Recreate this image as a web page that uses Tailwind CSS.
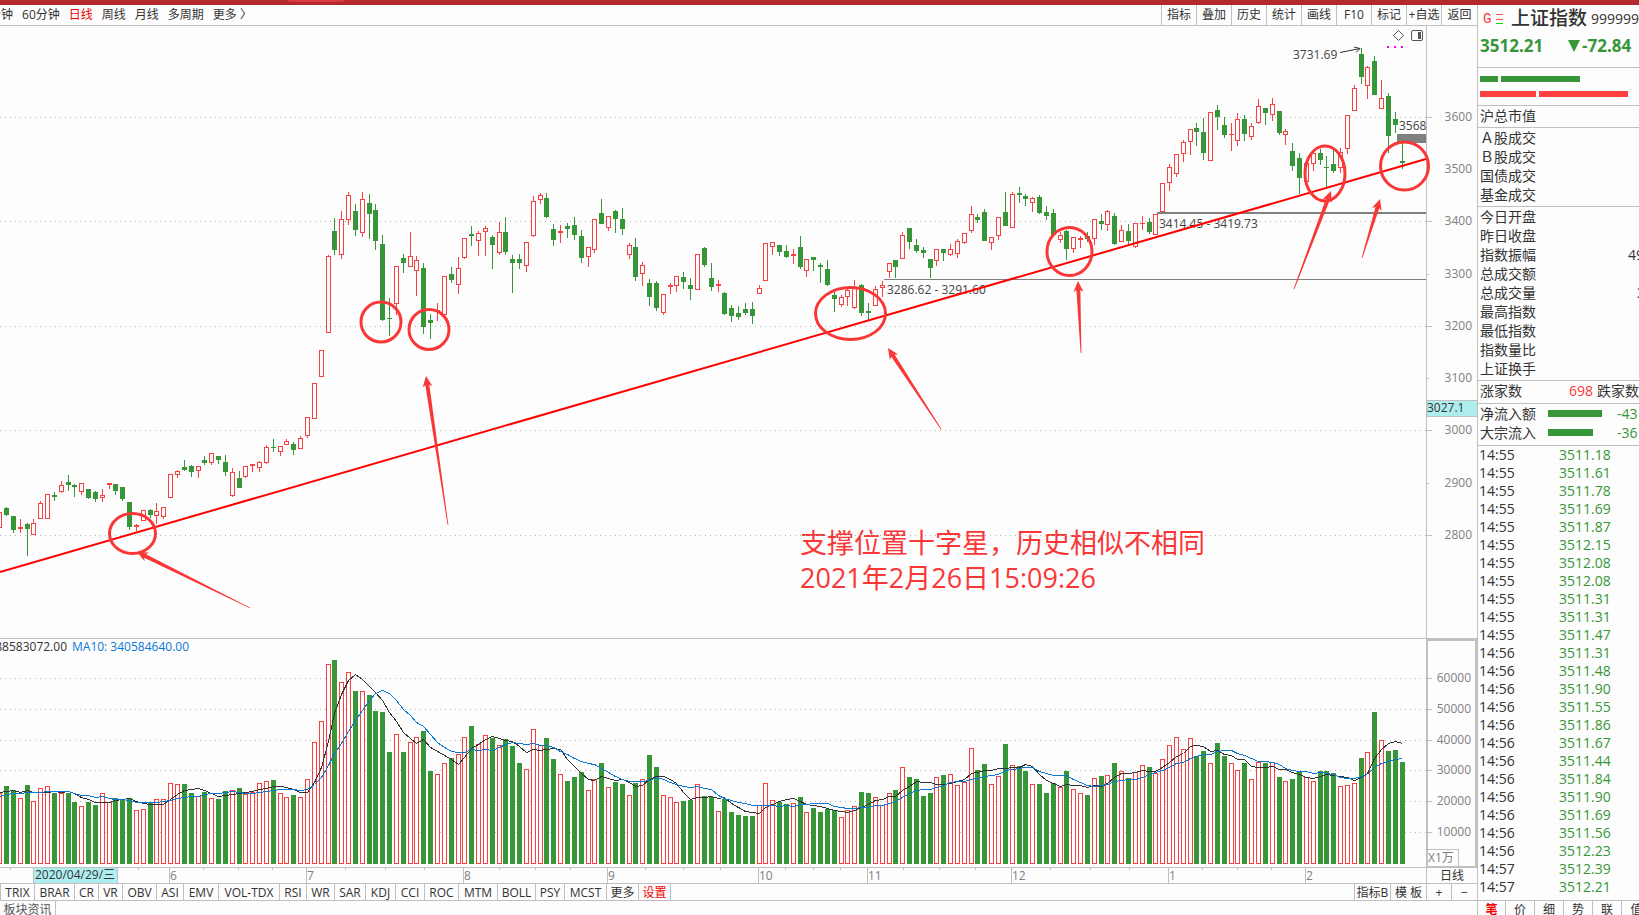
<!DOCTYPE html>
<html lang="zh-CN">

<head>
    <meta charset="UTF-8">
    <meta name="viewport" content="width=device-width, initial-scale=1.0">
    <title>上证指数 日线</title>
    <script src="https://cdn.jsdelivr.net/npm/@tailwindcss/browser@4"></script>
</head>

<body class="bg-[#fdfdfd] text-[#333] text-xs font-['Open_Sans','Noto_Sans_CJK_SC',sans-serif]">
    <div class="h-screen flex flex-col overflow-hidden whitespace-nowrap">
        <!-- Title strip -->
        <div class="h-[5px] shrink-0 bg-[#b5282f] flex">
            <div class="ml-72 w-14 h-0.5 bg-[#d83a40] rounded-b"></div>
        </div>

        <div class="flex-1 flex min-h-0">
            <!-- Chart side -->
            <main class="flex-1 min-w-0 flex flex-col">
                <nav class="h-[21px] shrink-0 flex justify-between border-b border-[#c0c0c0]">
                    <div class="flex items-center gap-[9px] -ml-[11px]">
                        <button>分钟</button>
                        <button>60分钟</button>
                        <button class="text-[#f00000]">日线</button>
                        <button>周线</button>
                        <button>月线</button>
                        <button>多周期</button>
                        <button>更多 〉</button>
                    </div>
                    <div class="flex">
                        <button class="w-[35px] border-l border-[#c0c0c0]">指标</button>
                        <button class="w-[35px] border-l border-[#c0c0c0]">叠加</button>
                        <button class="w-[35px] border-l border-[#c0c0c0]">历史</button>
                        <button class="w-[35px] border-l border-[#c0c0c0]">统计</button>
                        <button class="w-[35px] border-l border-[#c0c0c0]">画线</button>
                        <button class="w-[35px] border-l border-[#c0c0c0]">F10</button>
                        <button class="w-[35px] border-l border-[#c0c0c0]">标记</button>
                        <button class="w-[35px] border-l border-[#c0c0c0]">+自选</button>
                        <button class="w-9 border-l border-[#c0c0c0]">返回</button>
                    </div>
                </nav>

                <!-- Price pane -->
                <section class="relative flex-1 min-h-0 flex">
                    <svg class="flex-1 min-w-0 h-full overflow-visible z-10">
                        <!-- all y values count from the top of the window -->
                        <g transform="translate(0 -26)">
                            <g id="priceGrid" stroke="#b4b4b4" stroke-dasharray="1 4"></g>
                            <path d="M884 279.5H1426" stroke="#808080" />
                            <path d="M1157 213H1426" stroke="#808080" stroke-width="2" />
                            <rect x="1397" y="134" width="29" height="9" fill="#808080" />
                            <g id="candles" shape-rendering="crispEdges"></g>
                            <g fill="#444">
                                <text x="887" y="294">3286.62 - 3291.60</text>
                                <text x="1159" y="228">3414.45 - 3419.73</text>
                                <text x="1293" y="59">3731.69</text>
                                <text x="1399" y="130">3568</text>
                            </g>
                            <path d="M0 572L1426 159" stroke="#f00" stroke-width="2" />
                            <path d="M1340 52.500L1360 48.500M1354 47L1360 48.500L1356 52.500" stroke="#333" fill="none" />
                            <g fill="#f0f">
                                <rect x="1387" y="46" width="2" height="2" />
                                <rect x="1394" y="46" width="2" height="2" />
                                <rect x="1401" y="46" width="2" height="2" />
                            </g>
                            <path d="M1398.500 30.500L1403.500 35.500L1398.500 40.500L1393.500 35.500Z" fill="none" stroke="#555" />
                            <rect x="1411.500" y="30.500" width="11" height="10" rx="1.500" fill="none" stroke="#555" />
                            <rect x="1418" y="32" width="3" height="7" fill="#555" />
                            <g fill="none" stroke="#fa3737" stroke-width="3">
                                <ellipse cx="132.500" cy="533.500" rx="23" ry="20" />
                                <circle cx="381" cy="322" r="20" />
                                <circle cx="429" cy="329.500" r="20" />
                                <ellipse cx="850.500" cy="313.500" rx="35" ry="26" />
                                <ellipse cx="1069.500" cy="251.500" rx="22.500" ry="24" />
                                <ellipse cx="1325" cy="173.500" rx="20" ry="27.500" />
                                <circle cx="1404.500" cy="166" r="24" />
                            </g>
                            <g id="arrows" fill="#fa3737"></g>
                        </g>
                    </svg>
                    <svg class="w-[51px] shrink-0 h-full border-l border-[#c0c0c0]">
                        <g id="priceAxis" transform="translate(0 -26)" fill="#808080" text-anchor="end"></g>
                        <rect x="0" y="374.500" width="51" height="16" fill="#afeeee" stroke="#c0c0c0" />
                        <text x="0" y="386" fill="#333">3027.1</text>
                    </svg>
                    <p class="absolute left-[800px] top-[499px] text-[27px] leading-[35px] text-[#fa3737]">支撑位置十字星，历史相似不相同<br>2021年2月26日15:09:26</p>
                </section>

                <!-- Volume pane -->
                <section class="relative h-[230px] shrink-0 flex border-t border-[#c0c0c0]">
                    <svg class="flex-1 min-w-0 h-full border-b border-[#c0c0c0]">
                        <g transform="translate(0 -639)">
                            <g id="volumeGrid" stroke="#b4b4b4" stroke-dasharray="1 4"></g>
                            <g id="volumes" shape-rendering="crispEdges"></g>
                            <polyline id="ma5" fill="none" stroke="#333" shape-rendering="crispEdges" />
                            <polyline id="ma10" fill="none" stroke="#0a78d2" shape-rendering="crispEdges" />
                        </g>
                    </svg>
                    <div class="relative w-[51px] shrink-0 border-2 border-[#c0c0c0]">
                        <svg class="w-full h-full">
                            <g id="volumeAxis" transform="translate(-1 -641)" fill="#808080" text-anchor="end"></g>
                        </svg>
                        <span class="absolute left-0 bottom-0 w-[31px] h-[17px] leading-4 border-t border-r border-[#c0c0c0] text-[#808080]">X1万</span>
                    </div>
                    <div class="absolute left-0 top-0 flex leading-4 gap-[5px]">
                        <span class="w-[67px] overflow-hidden flex justify-end">388583072.00</span>
                        <span class="text-[#0a78d2]">MA10: 340584640.00</span>
                    </div>
                </section>

                <!-- Date axis -->
                <div class="relative h-4 shrink-0 flex border-b border-[#c0c0c0]">
                    <svg id="dateAxis" class="flex-1 min-w-0 h-full" fill="#808080"></svg>
                    <div class="w-[51px] shrink-0 border-l border-[#c0c0c0] text-center leading-4">日线</div>
                    <div class="absolute left-[33px] top-0 w-[85px] h-[15px] leading-3.5 px-px bg-[#afeeee] border-x border-[#c0c0c0]">2020/04/29/三</div>
                </div>

                <!-- Indicator tabs -->
                <div class="h-[17px] shrink-0 flex justify-between border-b border-l border-[#c0c0c0]">
                    <div class="flex leading-[17px]">
                        <button class="w-[34px] border-r border-[#c0c0c0]">TRIX</button>
                        <button class="w-10 border-r border-[#c0c0c0]">BRAR</button>
                        <button class="w-6 border-r border-[#c0c0c0]">CR</button>
                        <button class="w-6 border-r border-[#c0c0c0]">VR</button>
                        <button class="w-[34px] border-r border-[#c0c0c0]">OBV</button>
                        <button class="w-[27px] border-r border-[#c0c0c0]">ASI</button>
                        <button class="w-[35px] border-r border-[#c0c0c0]">EMV</button>
                        <button class="w-[61px] border-r border-[#c0c0c0]">VOL-TDX</button>
                        <button class="w-[27px] border-r border-[#c0c0c0]">RSI</button>
                        <button class="w-7 border-r border-[#c0c0c0]">WR</button>
                        <button class="w-[31px] border-r border-[#c0c0c0]">SAR</button>
                        <button class="w-[30px] border-r border-[#c0c0c0]">KDJ</button>
                        <button class="w-[29px] border-r border-[#c0c0c0]">CCI</button>
                        <button class="w-[34px] border-r border-[#c0c0c0]">ROC</button>
                        <button class="w-[39px] border-r border-[#c0c0c0]">MTM</button>
                        <button class="w-[38px] border-r border-[#c0c0c0]">BOLL</button>
                        <button class="w-[29px] border-r border-[#c0c0c0]">PSY</button>
                        <button class="w-[42px] border-r border-[#c0c0c0]">MCST</button>
                        <button class="w-8 border-r border-[#c0c0c0]">更多</button>
                        <button class="w-8 border-r border-[#c0c0c0] text-[#f00000]">设置</button>
                    </div>
                    <div class="flex leading-[17px]">
                        <button class="w-9 border-l border-[#c0c0c0]">指标B</button>
                        <button class="w-9 border-l border-[#c0c0c0]">模 板</button>
                        <button class="w-[25px] border-l border-[#c0c0c0]">+</button>
                        <button class="w-[26px] border-l border-[#c0c0c0]">−</button>
                    </div>
                </div>
                <div class="h-3.5 shrink-0 flex overflow-hidden">
                    <button class="w-14 h-[18px] border-r border-[#c0c0c0] text-[#555]">板块资讯</button>
                </div>
            </main>

            <!-- Quote panel -->
            <aside class="w-[162px] shrink-0 flex flex-col overflow-hidden border-l border-[#c0c0c0] text-sm">
                <header class="h-[63px] shrink-0 border-b border-[#c0c0c0]">
                    <div class="flex items-center h-7 pl-[5px]">
                        <span class="w-[18px] font-['Liberation_Mono',monospace] text-[#fa3737]">G</span>
                        <svg class="w-3 h-3 mr-[3px] shrink-0" fill="none">
                            <path d="M0 1.500H7M0 6.500H7" stroke="#fa5050" />
                            <path d="M0 10.500H7" stroke="#00e000" />
                        </svg>
                        <h1 class="text-[19px] font-medium">上证指数</h1>
                        <span class="ml-1">999999</span>
                    </div>
                    <div class="flex leading-[26px] pl-0.5 text-[17px] font-bold text-[#379637]">
                        <span class="w-[88px]">3512.21</span>
                        <svg class="w-3 h-3 mt-[7px] mr-0.5 shrink-0" fill="#379637">
                            <path d="M0 0H12L6 12Z" />
                        </svg>
                        <span>-72.84</span>
                    </div>
                </header>
                <div class="h-[38px] shrink-0 flex flex-col gap-[9px] pt-2 pl-0.5 border-b border-[#c0c0c0]">
                    <div class="flex gap-[3px]">
                        <i class="w-[18px] h-1.5 bg-[#379637]"></i>
                        <i class="w-[79px] h-1.5 bg-[#379637]"></i>
                    </div>
                    <div class="flex gap-[3px]">
                        <i class="w-14 h-1.5 bg-[#ff4040]"></i>
                        <i class="w-[89px] h-1.5 bg-[#ff4040]"></i>
                    </div>
                </div>
                <div class="h-[22px] shrink-0 pl-0.5 leading-[19px] border-b border-[#c0c0c0]">沪总市值</div>
                <ul class="h-[79px] shrink-0 pl-0.5 leading-[19px] border-b border-[#c0c0c0]">
                    <li>Ａ股成交</li>
                    <li>Ｂ股成交</li>
                    <li>国债成交</li>
                    <li>基金成交</li>
                </ul>
                <ul class="h-[174px] shrink-0 pl-0.5 leading-[19px] border-b border-[#c0c0c0]">
                    <li>今日开盘</li>
                    <li>昨日收盘</li>
                    <li class="flex"><span class="w-[148px] shrink-0">指数振幅</span>49</li>
                    <li>总成交额</li>
                    <li class="flex"><span class="w-[157px] shrink-0">总成交量</span>3</li>
                    <li>最高指数</li>
                    <li>最低指数</li>
                    <li>指数量比</li>
                    <li>上证换手</li>
                </ul>
                <div class="h-[23px] shrink-0 flex pl-0.5 leading-[19px] border-b border-[#c0c0c0]">
                    <span class="w-[89px] shrink-0">涨家数</span>
                    <span class="w-7 shrink-0 text-[#fa3737]">698</span>
                    <span>跌家数</span>
                </div>
                <div class="h-[42px] shrink-0 pl-0.5 leading-[19px] border-b border-[#c0c0c0]">
                    <div class="flex items-center">
                        <span class="w-[68px] shrink-0">净流入额</span>
                        <div class="w-[69px] shrink-0"><div class="w-[54px] h-[7px] bg-[#379637]"></div></div>
                        <span class="text-[#379637]">-43</span>
                    </div>
                    <div class="flex items-center">
                        <span class="w-[68px] shrink-0">大宗流入</span>
                        <div class="w-[69px] shrink-0"><div class="w-[45px] h-[7px] bg-[#379637]"></div></div>
                        <span class="text-[#379637]">-36</span>
                    </div>
                </div>
                <div class="flex-1 min-h-0 overflow-hidden">
                    <table class="leading-[18px]">
                        <tbody id="trades"></tbody>
                    </table>
                </div>
                <div class="h-[15px] shrink-0 flex overflow-hidden border-t border-[#c0c0c0] text-xs">
                    <button class="w-7 h-[18px] shrink-0 border-r border-[#c0c0c0] font-bold text-[#f00000]">笔</button>
                    <button class="w-[29px] h-[18px] shrink-0 border-r border-[#c0c0c0]">价</button>
                    <button class="w-[29px] h-[18px] shrink-0 border-r border-[#c0c0c0]">细</button>
                    <button class="w-[29px] h-[18px] shrink-0 border-r border-[#c0c0c0]">势</button>
                    <button class="w-[29px] h-[18px] shrink-0 border-r border-[#c0c0c0]">联</button>
                    <button class="w-[29px] h-[18px] shrink-0">值</button>
                </div>
            </aside>
        </div>
    </div>

    <script>
        const RED = '#fa4141';
        const GREEN = '#379637';

        // direction, high, body top, body bottom, low, volume top
        const bars = `
R 512 512 528 528 793|G 507 508 515 516 786|G 516 516 530 533 790|R 519 527 529 533 798|G 523 524 529 556 785|R 519 523 535 535 801
R 501 503 519 519 788|R 494 494 519 519 786|G 492 495 497 501 793|R 481 485 492 493 793|G 475 482 485 491 793|G 484 485 487 497 802
R 483 483 492 495 806|G 489 489 498 499 802|G 491 492 499 502 805|R 489 495 498 502 793|R 483 483 485 489 802|G 484 484 491 495 798
G 487 487 499 501 799|G 502 502 527 530 798|R 524 525 527 531 810|R 510 510 521 521 809|G 509 510 515 518 803|R 503 511 516 524 799
R 507 507 517 519 799|R 474 474 498 498 783|R 470 471 475 478 784|G 460 467 470 471 784|G 465 466 472 477 793|R 466 466 471 478 796
G 456 460 463 465 792|R 453 453 463 465 798|G 456 456 460 464 799|G 455 462 472 476 791|R 468 472 496 497 790|G 471 478 488 488 788
R 466 466 477 478 794|R 464 464 466 472 792|R 461 462 468 472 783|R 445 447 463 464 781|G 439 447 448 452 780|R 446 446 452 456 793
R 439 441 445 445 797|G 442 444 450 455 795|R 436 438 449 449 797|R 417 417 436 438 779|R 383 383 419 419 742|R 350 350 377 377 721
R 255 256 333 333 664|G 218 231 250 255 660|R 211 219 255 259 682|R 192 195 220 225 672|G 204 211 230 236 691|R 192 199 233 237 691
G 194 203 214 239 695|G 204 210 241 250 711|G 235 244 320 321 712|G 298 318 319 336 752|R 266 266 304 315 734|G 254 258 263 273 752
R 232 256 267 267 742|R 256 260 271 296 737|G 263 268 327 334 731|G 314 320 323 339 771|R 303 310 311 321 774|R 276 276 315 315 763
G 267 274 280 283 758|R 257 268 285 294 754|R 238 238 258 259 737|G 226 234 236 246 726|R 231 233 241 256 744|R 226 228 232 256 735
G 235 237 245 269 738|R 222 232 253 255 745|G 217 232 252 255 739|G 255 259 263 293 746|G 254 259 263 269 763|R 242 242 266 272 769
R 196 201 236 237 729|R 193 195 200 204 745|G 193 198 217 218 738|G 224 229 240 246 759|R 225 231 233 243 774|G 223 226 229 238 781
G 217 225 235 240 777|G 230 236 258 263 772|R 247 247 257 267 790|R 219 219 250 253 779|G 199 213 224 224 763|R 216 216 228 231 787
G 210 211 219 233 782|G 208 219 229 235 784|R 243 245 255 259 795|G 238 247 277 281 783|R 262 265 274 286 779|G 279 283 297 306 755
G 281 283 308 311 767|R 294 294 313 315 795|R 283 285 287 294 797|R 276 276 286 292 802|G 272 277 282 289 801|G 278 285 289 300 800
R 254 254 290 290 784|G 247 248 265 267 796|G 263 278 287 291 797|R 280 284 286 292 811|G 292 293 314 315 799|G 305 308 316 322 812
G 306 313 317 320 815|G 303 309 313 315 816|G 302 309 316 324 816|R 285 288 294 294 805|R 243 243 281 281 783|R 242 242 247 255 800
G 245 245 252 256 802|G 245 251 257 258 804|R 249 254 256 264 803|G 236 247 267 269 797|R 259 259 271 277 812|G 257 257 260 271 808
G 263 265 267 283 812|G 260 269 285 286 809|G 290 295 299 312 810|R 295 297 305 307 817|R 287 290 297 306 810|R 280 288 308 309 806
G 284 285 313 316 792|G 303 311 313 320 793|R 286 289 306 306 797|R 281 285 288 297 805|R 263 263 272 278 793|G 260 260 267 278 790
R 232 235 259 259 767|G 228 228 242 249 777|G 239 245 251 253 779|G 247 250 253 258 796|G 259 259 268 278 793|R 249 249 261 266 777
G 249 249 253 261 775|R 244 249 255 256 774|R 239 241 254 258 785|R 233 233 243 244 782|R 206 214 231 233 748|G 214 217 220 223 770
G 209 212 241 241 764|R 237 237 243 250 784|R 217 217 236 240 776|G 192 212 226 226 744|R 192 194 228 228 765|G 187 193 195 203 766
G 194 196 199 206 771|R 197 198 203 212 784|G 195 197 213 214 784|G 206 212 216 220 793|G 209 213 235 235 783|R 232 235 240 243 787
G 230 231 249 260 771|R 237 237 249 253 789|R 236 238 240 248 793|G 232 236 239 242 795|R 219 219 239 245 778|G 214 221 224 230 776
R 210 211 225 231 775|G 213 216 244 245 763|R 225 230 242 242 771|G 224 231 241 244 778|R 223 223 247 248 772|R 216 223 224 230 765
G 218 222 232 234 767|R 214 214 235 235 773|R 183 183 212 212 759|R 164 167 183 191 745|R 154 154 174 177 737|R 140 142 154 162 749
R 129 129 142 155 738|G 123 128 132 146 756|G 118 132 153 160 751|R 112 112 161 161 763|G 105 110 117 130 743|G 117 125 135 138 756
R 123 134 135 151 763|R 113 119 141 146 770|G 115 119 134 141 763|R 123 126 137 140 779|R 99 106 123 124 762|G 108 108 113 125 763
R 98 104 115 121 762|G 111 111 133 135 777|R 129 131 135 145 781|G 143 151 166 171 779|G 153 158 178 194 771|R 163 163 182 182 777
R 149 153 164 171 781|G 149 153 160 165 771|G 156 167 168 187 771|G 150 164 171 173 773|R 148 152 168 173 786|R 115 115 149 154 785
R 85 88 111 111 783|G 48 54 77 84 758|R 66 67 86 99 752|G 56 61 95 95 712|R 80 98 109 109 740|G 93 96 136 153 751
G 112 119 125 133 750|G 143 161 163 169 762`.trim().split(/[|\n]/).map((row) => {
            const [dir, ...values] = row.split(' ');
            return [dir, ...values.map(Number)];
        });

        const barX = (i) => Math.floor(6.485 + 6.8415 * (i - 1));

        const body = (dir, x, top, bottom) => dir === 'G' || bottom - top < 3
            ? `<rect x="${x - 2}" y="${top}" width="5" height="${bottom - top}" fill="${dir === 'G' ? GREEN : RED}"/>`
            : `<rect x="${x - 1.5}" y="${top + 0.5}" width="4" height="${bottom - top - 1}" fill="#fdfdfd" stroke="${RED}"/>`;

        const fill = (id, html) => {
            document.getElementById(id).innerHTML = html;
        };

        fill('candles', bars.map(([dir, high, top, bottom, low], i) => {
            const x = barX(i);
            const wick = `<rect x="${x}" y="${high}" width="1" height="${low - high}" fill="${dir === 'G' ? GREEN : RED}"/>`;
            return wick + body(dir, x, top, bottom);
        }).join(''));

        fill('volumes', bars.map((bar, i) => body(bar[0], barX(i), bar[5], 864)).join(''));

        // moving averages, seeded with the volumes left of the window
        const seed = [800, 802, 800, 798, 797, 794, 792, 791, 791];
        const volumes = seed.concat(bars.map((bar) => bar[5]));
        const average = (id, days) => {
            const points = bars.map((bar, i) => {
                const end = i + seed.length + 1;
                const sum = volumes.slice(end - days, end).reduce((a, b) => a + b, 0);
                return `${barX(i) + 0.5},${Math.round(sum / days) + 0.5}`;
            });
            document.getElementById(id).setAttribute('points', points.join(' '));
        };
        average('ma5', 5);
        average('ma10', 10);

        // Grids and axes
        const hline = (y) => `<line x1="0" x2="100%" y1="${y + 0.5}" y2="${y + 0.5}"/>`;
        fill('priceGrid', [117, 221, 326, 430, 535].map(hline).join(''));
        fill('volumeGrid', [678, 709, 740, 770, 801, 832].map(hline).join(''));

        const axis = (labels, right) => labels.map(([text, y], i) =>
            `<path d="M0 ${y + 0.5}h${i % 2 && right === 45 ? 2 : 5}" stroke="#c0c0c0"/><text x="${right}" y="${y + 4}">${text}</text>`).join('');
        fill('priceAxis', axis([[3600, 117], [3500, 169], [3400, 221], [3300, 274], [3200, 326], [3100, 378], [3000, 430], [2900, 483], [2800, 535]], 45));
        fill('volumeAxis', axis([[60000, 678], [50000, 709], [40000, 740], [30000, 770], [20000, 801], [10000, 832]], 44));

        const months = [[6, 169], [7, 306], [8, 463], [9, 607], [10, 758], [11, 867], [12, 1011], [1, 1168], [2, 1305]];
        const weeks = [10, 138, 203, 238, 272, 345, 385, 424, 499, 535, 570, 645, 683, 720, 785, 813, 840, 903, 939, 975, 1050, 1090, 1129, 1202, 1237, 1271];
        fill('dateAxis', months.map(([m, x]) => `<path d="M${x + 0.5} 0V15" stroke="#c0c0c0"/><text x="${x + 1}" y="12">${m}</text>`).join('')
            + weeks.map((x) => `<path d="M${x + 0.5} 0V2" stroke="#c0c0c0"/>`).join(''));

        // Tapered arrows: tip x, tip y, tail x, tail y
        fill('arrows', [
            [137, 552, 250, 608],
            [426, 376, 448, 525],
            [888, 348, 941, 429],
            [1078, 281, 1081, 353],
            [1331, 191, 1294, 289],
            [1380, 199, 1362, 258],
        ].map(([x1, y1, x2, y2]) => {
            const len = Math.hypot(x2 - x1, y2 - y1);
            const ux = (x2 - x1) / len;
            const uy = (y2 - y1) / len;
            const at = (along, side) => `${x1 + ux * along - uy * side},${y1 + uy * along + ux * side}`;
            return `<polygon points="${[at(0, 0), at(11, 5), at(9, 2), at(len, 0.4), at(len, -0.4), at(9, -2), at(11, -5)].join(' ')}"/>`;
        }).join(''));

        // Trades
        const trades = [
            ['14:55', '3511.18 3511.61 3511.78 3511.69 3511.87 3512.15 3512.08 3512.08 3511.31 3511.31 3511.47'],
            ['14:56', '3511.31 3511.48 3511.90 3511.55 3511.86 3511.67 3511.44 3511.84 3511.90 3511.69 3511.56 3512.23'],
            ['14:57', '3512.39 3512.21'],
        ];
        fill('trades', trades.map(([time, prices]) => prices.split(' ').map((price) =>
            `<tr><td class="w-[81px] p-0 pl-px">${time}</td><td class="p-0 text-[#379637]">${price}</td></tr>`).join('')).join(''));
    </script>
</body>

</html>
